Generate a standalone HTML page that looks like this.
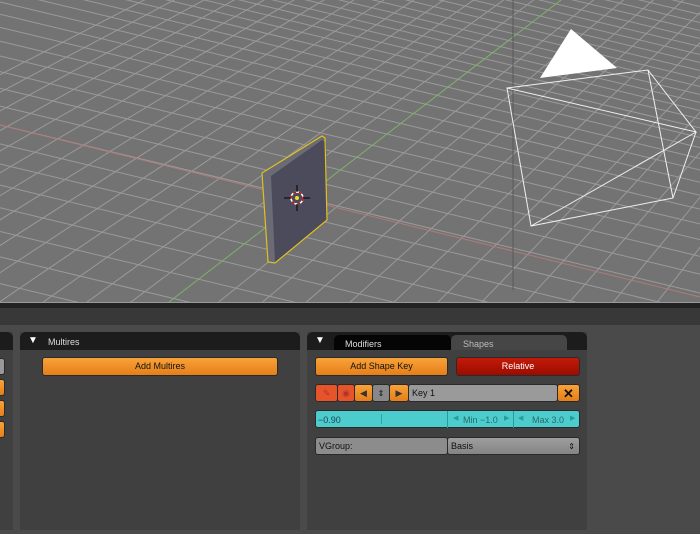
<!DOCTYPE html>
<html style="overflow:hidden"><head><meta charset="utf-8"><style>
*{margin:0;padding:0;box-sizing:border-box}
body{width:700px;height:534px;overflow:hidden;background:#4a4a4a;font-family:"Liberation Sans",sans-serif;font-size:9px;position:relative}
.a{position:absolute}
.btn{position:absolute;border:1px solid #2a2a2a;border-radius:3px;text-align:center;line-height:17px;color:#111;font-size:9px}
.or{background:linear-gradient(#f9a23a,#e57f18)}
.hd{position:absolute;background:#1c1c1c;border-radius:6px 6px 0 0}
.pn{position:absolute;background:#404040}
</style></head><body>
<svg class="a" style="left:0;top:0;overflow:hidden" width="700" height="305" id="vp">
<rect width="700" height="305" fill="#737373"/>
<g id="grid" stroke="#9a9a9a" stroke-width="1"></g>
<line x1="0" y1="125" x2="700" y2="297" stroke="#b07a7a" stroke-width="1"/>
<line x1="169" y1="302" x2="561" y2="0" stroke="#7bb36b" stroke-width="1"/>
<line x1="513" y1="0" x2="513" y2="290" stroke="#5a5a5a" stroke-width="1"/>
<polygon points="262,173 322,136 325,138 327,220 275,263 268,262" fill="#6b6b75"/>
<polygon points="271,176 322,140 326,143 327,220 275,262" fill="#4b4b5b"/>
<polygon points="262,173 322,136 325,138 327,220 275,263 268,262" fill="none" stroke="#e0c020" stroke-width="1.2"/>
<circle cx="297" cy="198" r="6" fill="none" stroke="#fff" stroke-width="1.5"/>
<circle cx="297" cy="198" r="6" fill="none" stroke="#c01010" stroke-width="1.5" stroke-dasharray="3 3"/>
<line x1="284" y1="198" x2="291" y2="198" stroke="#000"/><line x1="303" y1="198" x2="310" y2="198" stroke="#000"/>
<line x1="297" y1="185" x2="297" y2="192" stroke="#000"/><line x1="297" y1="204" x2="297" y2="211" stroke="#000"/>
<circle cx="297" cy="198" r="2" fill="#f0e020"/>
<polygon points="571,29 540,78 617,68" fill="#fff"/>
<g stroke="#f0f0f0" stroke-width="1" fill="none">
<polyline points="507,88 648,70 696,132 507,88 531,226 673,198 648,70"/>
<line x1="531" y1="226" x2="696" y2="132"/><line x1="696" y1="132" x2="673" y2="198"/>
</g>
</svg>
<div class="a" style="left:0;top:302px;width:700px;height:1px;background:#9a9a9a"></div>
<div class="a" style="left:0;top:303px;width:700px;height:5px;background:#222"></div>
<div class="a" style="left:0;top:308px;width:700px;height:17px;background:#383838"></div>

<div class="pn" style="left:0;top:332px;width:13px;height:198px"></div>
<div class="hd" style="left:-10px;top:332px;width:23px;height:18px"></div>
<div class="btn" style="left:-6px;top:358px;width:11px;height:17px;background:#999"></div>
<div class="btn or" style="left:-6px;top:379px;width:11px;height:17px"></div>
<div class="btn or" style="left:-6px;top:400px;width:11px;height:17px"></div>
<div class="btn or" style="left:-6px;top:421px;width:11px;height:17px"></div>

<div class="pn" style="left:20px;top:332px;width:280px;height:198px"></div>
<div class="hd" style="left:20px;top:332px;width:280px;height:18px"></div>
<div class="a" style="left:28px;top:335px;color:#fff;font-size:10px">▼</div>
<div class="a" style="left:48px;top:337px;color:#ddd">Multires</div>
<div class="btn or" style="left:42px;top:357px;width:236px;height:19px">Add Multires</div>

<div class="pn" style="left:307px;top:332px;width:280px;height:198px"></div>
<div class="hd" style="left:307px;top:332px;width:280px;height:18px"></div>
<div class="a" style="left:334px;top:335px;width:117px;height:15px;background:#050505;border-radius:5px 5px 0 0;color:#ddd;padding:4px 0 0 11px">Modifiers</div>
<div class="a" style="left:451px;top:335px;width:116px;height:15px;background:#464646;border-radius:5px 5px 0 0;color:#bbb;padding:4px 0 0 12px">Shapes</div>
<div class="a" style="left:315px;top:335px;color:#fff;font-size:10px">▼</div>
<div class="btn or" style="left:315px;top:357px;width:133px;height:19px">Add Shape Key</div>
<div class="btn" style="left:456px;top:357px;width:124px;height:19px;background:linear-gradient(#c21a08,#9c0c00);color:#fff">Relative</div>
<div class="btn" style="left:315px;top:384px;width:23px;height:18px;background:#e8542a;color:#a33">✎</div>
<div class="btn" style="left:337px;top:384px;width:18px;height:18px;background:#e8542a;color:#a33">◉</div>
<div class="btn or" style="left:354px;top:384px;width:19px;height:18px;color:#333">◀</div>
<div class="btn" style="left:372px;top:384px;width:18px;height:18px;background:#888;color:#111;font-size:8px">⇕</div>
<div class="btn or" style="left:389px;top:384px;width:20px;height:18px;color:#333">▶</div>
<div class="btn" style="left:408px;top:384px;width:150px;height:18px;background:#9a9a9a;text-align:left;padding-left:3px">Key 1</div>
<div class="btn or" style="left:557px;top:384px;width:23px;height:18px;font-weight:bold;font-size:13px">✕</div>
<div class="btn" style="left:315px;top:410px;width:265px;height:18px;background:#4ccccc;border-color:#2a2a2a"></div>
<div class="a" style="left:318px;top:415px;color:#245">−0.90</div>
<div class="a" style="left:381px;top:414px;width:1px;height:10px;background:#2aa"></div>
<div class="a" style="left:447px;top:411px;width:1px;height:17px;background:#2a9a9a"></div>
<div class="a" style="left:513px;top:411px;width:1px;height:17px;background:#2a9a9a"></div>
<div class="a" style="left:453px;top:414px;color:#2a9a9a;font-size:7px">◀</div>
<div class="a" style="left:463px;top:415px;color:#2a6a6a">Min −1.0</div>
<div class="a" style="left:504px;top:414px;color:#2a9a9a;font-size:7px">▶</div>
<div class="a" style="left:518px;top:414px;color:#2a9a9a;font-size:7px">◀</div>
<div class="a" style="left:532px;top:415px;color:#2a6a6a">Max 3.0</div>
<div class="a" style="left:570px;top:414px;color:#2a9a9a;font-size:7px">▶</div>
<div class="btn" style="left:315px;top:437px;width:133px;height:18px;background:#8c8c8c;text-align:left;padding-left:3px">VGroup:</div>
<div class="btn" style="left:447px;top:437px;width:133px;height:18px;background:linear-gradient(#9e9e9e,#848484);text-align:left;padding-left:3px">Basis<span style="position:absolute;right:4px;font-size:8px">⇕</span></div>

<script>
(function(){
var g=document.getElementById('grid'),s='',i,y,sp;
var ys=[125];
y=125;for(i=0;i<40&&y>-180;i++){sp=9+0.06*(y+40);if(sp<8)sp=8;y-=sp;ys.push(y);}
y=125;for(i=0;i<30&&y<320;i++){sp=9+0.06*(y+40);y+=sp;ys.push(y);}
for(i=0;i<ys.length;i++){var y0=ys[i];s+='<line x1="0" y1="'+y0+'" x2="700" y2="'+(y0+168)+'"/>';}
var VX=1400,VY=-650;
for(var k=-14;k<=20;k++){if(k==0)continue;var x0=171+44*k;
 var dx=VX-x0,dy=VY-305,t=-0.5;
 s+='<line x1="'+(x0+dx*t)+'" y1="'+(305+dy*t)+'" x2="'+VX+'" y2="'+VY+'"/>';}
g.innerHTML=s;
})();
</script>
</body></html>
